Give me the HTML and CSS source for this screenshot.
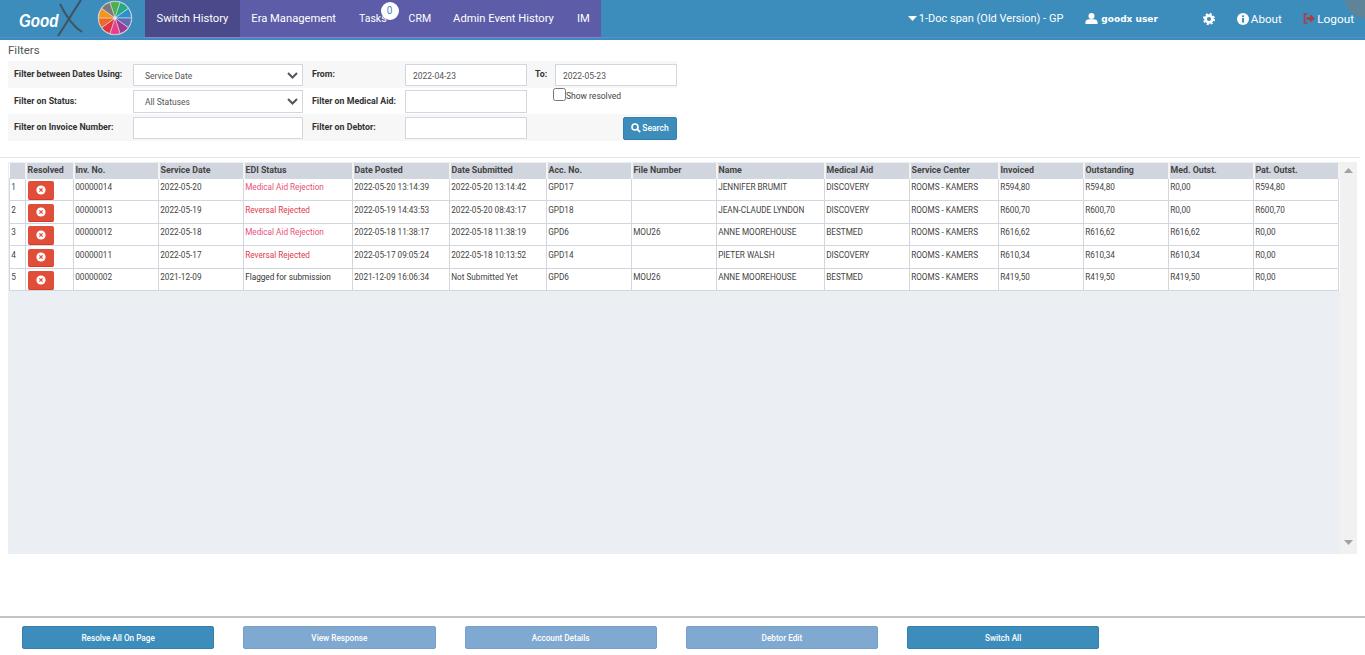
FILE: index.html
```html
<!DOCTYPE html>
<html lang="en">
<head>
<meta charset="utf-8">
<title>Switch History</title>
<link rel="stylesheet" href="styles.css">
</head>
<body>
<header class="nav">
  <span class="corner-blob"></span>
  <div class="logo">
    <span class="logo-good">Good</span>
    <svg class="logo-x" width="28" height="38" viewBox="0 0 28 38"><path d="M3 4C8 14 15 26 25 32" stroke="#3f5564" stroke-width="2" fill="none"/><path d="M24 0C16 12 9 24 1 36" stroke="#3f5564" stroke-width="2.2" fill="none"/></svg>
  </div>
  <svg class="wheel" width="36" height="36" viewBox="-18 -18 36 36">
    <circle r="17.2" fill="#c9d3dc"/>
    <g class="wedges">
    <path fill="#4caf50" d="M0 0L-5 -15.7A16.5 16.5 0 0 1 5 -15.7Z"/>
    <path fill="#26a880" transform="rotate(36)" d="M0 0L-5 -15.7A16.5 16.5 0 0 1 5 -15.7Z"/>
    <path fill="#2d8fd0" transform="rotate(72)" d="M0 0L-5 -15.7A16.5 16.5 0 0 1 5 -15.7Z"/>
    <path fill="#5f6bb5" transform="rotate(108)" d="M0 0L-5 -15.7A16.5 16.5 0 0 1 5 -15.7Z"/>
    <path fill="#9b3a8f" transform="rotate(144)" d="M0 0L-5 -15.7A16.5 16.5 0 0 1 5 -15.7Z"/>
    <path fill="#e83e8c" transform="rotate(180)" d="M0 0L-5 -15.7A16.5 16.5 0 0 1 5 -15.7Z"/>
    <path fill="#e0353f" transform="rotate(216)" d="M0 0L-5 -15.7A16.5 16.5 0 0 1 5 -15.7Z"/>
    <path fill="#f26522" transform="rotate(252)" d="M0 0L-5 -15.7A16.5 16.5 0 0 1 5 -15.7Z"/>
    <path fill="#f7941d" transform="rotate(288)" d="M0 0L-5 -15.7A16.5 16.5 0 0 1 5 -15.7Z"/>
    <path fill="#7a7a7a" transform="rotate(324)" d="M0 0L-5 -15.7A16.5 16.5 0 0 1 5 -15.7Z"/>
    </g>
    <circle r="1.8" fill="#e4e8ea"/>
  </svg>
  <nav class="tabs">
    <a class="tab tab-active">Switch History</a>
    <a class="tab">Era Management</a>
    <a class="tab tab-tight">Tasks<span class="badge">0</span></a>
    <a class="tab tab-tight">CRM</a>
    <a class="tab">Admin Event History</a>
    <a class="tab">IM</a>
  </nav>
  <div class="nav-right">
    <span class="nav-item practice"><svg width="9" height="5" viewBox="0 0 9 5"><path d="M0 0H9L4.5 5Z" fill="#fff"/></svg>1-Doc span (Old Version) - GP</span>
    <span class="nav-item user"><svg width="13" height="11" viewBox="0 0 13 11"><circle cx="6.5" cy="3" r="3" fill="#fff"/><path d="M0.5 11V9.2C0.5 7.2 2.5 6.3 4 6.3H9C10.5 6.3 12.5 7.2 12.5 9.2V11Z" fill="#fff"/></svg><span class="user-name">goodx user</span></span>
    <span class="nav-item gear"><svg width="12" height="12" viewBox="0 0 12 12"><circle cx="6" cy="6" r="3.4" fill="none" stroke="#fff" stroke-width="2.6"/><circle cx="6" cy="6" r="5" fill="none" stroke="#fff" stroke-width="2" stroke-dasharray="2.1 1.83"/></svg></span>
    <span class="nav-item about"><svg width="12" height="12" viewBox="0 0 12 12"><circle cx="6" cy="6" r="6" fill="#fff"/><rect x="5" y="5" width="2" height="4.5" fill="#3c8dbc"/><rect x="5" y="2.4" width="2" height="1.7" fill="#3c8dbc"/></svg>About</span>
    <span class="nav-item logout"><svg width="12" height="11" viewBox="0 0 12 11"><path d="M4.5 1H1.5V10H4.5" fill="none" stroke="#a5413f" stroke-width="1.7"/><path d="M3.5 4H7V1.2L12 5.5L7 9.8V7H3.5Z" fill="#a5413f"/></svg>Logout</span>
  </div>
</header>

<main class="content">
  <h2 class="filters-title">Filters</h2>
  <form class="filters">
    <div class="f-row f-band f-first">
      <label class="f-label">Filter between Dates Using:</label>
      <div class="f-select">Service Date<svg width="11" height="7" viewBox="0 0 11 7"><path d="M1 1L5.5 5.5L10 1" fill="none" stroke="#555" stroke-width="2"/></svg></div>
      <label class="f-label">From:</label>
      <div class="f-input">2022-04-23</div>
      <label class="f-label f-to">To:</label>
      <div class="f-input">2022-05-23</div>
    </div>
    <div class="f-row f-mid">
      <label class="f-label">Filter on Status:</label>
      <div class="f-select">All Statuses<svg width="11" height="7" viewBox="0 0 11 7"><path d="M1 1L5.5 5.5L10 1" fill="none" stroke="#555" stroke-width="2"/></svg></div>
      <label class="f-label">Filter on Medical Aid:</label>
      <div class="f-input"></div>
      <div class="f-check"><span class="check-box"></span><span class="check-text">Show resolved</span></div>
    </div>
    <div class="f-row f-band f-last">
      <label class="f-label">Filter on Invoice Number:</label>
      <div class="f-input"></div>
      <label class="f-label">Filter on Debtor:</label>
      <div class="f-input"></div>
      <div class="f-search"><button type="button" class="search-btn"><svg width="10" height="10" viewBox="0 0 10 10"><circle cx="4" cy="4" r="3" fill="none" stroke="#fff" stroke-width="1.6"/><path d="M6.2 6.2L9.2 9.2" stroke="#fff" stroke-width="1.8"/></svg>Search</button></div>
    </div>
  </form>
  <hr class="rule">
  <section class="grid-panel">
    <div class="grid-area">
      <table class="grid">
        <colgroup>
          <col class="c0"><col class="c1"><col class="c2"><col class="c2"><col class="c3"><col class="c4"><col class="c4"><col class="c2"><col class="c2"><col class="c5"><col class="c2"><col class="c6"><col class="c2"><col class="c2"><col class="c2"><col class="c2">
        </colgroup>
        <thead>
          <tr><th></th><th>Resolved</th><th>Inv. No.</th><th>Service Date</th><th>EDI Status</th><th>Date Posted</th><th>Date Submitted</th><th>Acc. No.</th><th>File Number</th><th>Name</th><th>Medical Aid</th><th>Service Center</th><th>Invoiced</th><th>Outstanding</th><th>Med. Outst.</th><th>Pat. Outst.</th></tr>
        </thead>
        <tbody>
          <tr class="r-short"><td>1</td><td><button type="button" class="x-btn"><svg width="10" height="10" viewBox="0 0 10 10"><circle cx="5" cy="5" r="4.6" fill="#fff"/><path d="M3.4 3.4L6.6 6.6M6.6 3.4L3.4 6.6" stroke="#e04e39" stroke-width="1.3"/></svg></button></td><td>00000014</td><td>2022-05-20</td><td class="st-pink">Medical Aid Rejection</td><td>2022-05-20 13:14:39</td><td>2022-05-20 13:14:42</td><td>GPD17</td><td></td><td>JENNIFER BRUMIT</td><td>DISCOVERY</td><td>ROOMS - KAMERS</td><td>R594,80</td><td>R594,80</td><td>R0,00</td><td>R594,80</td></tr>
          <tr class="r-tall"><td>2</td><td><button type="button" class="x-btn"><svg width="10" height="10" viewBox="0 0 10 10"><circle cx="5" cy="5" r="4.6" fill="#fff"/><path d="M3.4 3.4L6.6 6.6M6.6 3.4L3.4 6.6" stroke="#e04e39" stroke-width="1.3"/></svg></button></td><td>00000013</td><td>2022-05-19</td><td class="st-red">Reversal Rejected</td><td>2022-05-19 14:43:53</td><td>2022-05-20 08:43:17</td><td>GPD18</td><td></td><td>JEAN-CLAUDE LYNDON</td><td>DISCOVERY</td><td>ROOMS - KAMERS</td><td>R600,70</td><td>R600,70</td><td>R0,00</td><td>R600,70</td></tr>
          <tr class="r-short"><td>3</td><td><button type="button" class="x-btn"><svg width="10" height="10" viewBox="0 0 10 10"><circle cx="5" cy="5" r="4.6" fill="#fff"/><path d="M3.4 3.4L6.6 6.6M6.6 3.4L3.4 6.6" stroke="#e04e39" stroke-width="1.3"/></svg></button></td><td>00000012</td><td>2022-05-18</td><td class="st-pink">Medical Aid Rejection</td><td>2022-05-18 11:38:17</td><td>2022-05-18 11:38:19</td><td>GPD6</td><td>MOU26</td><td>ANNE MOOREHOUSE</td><td>BESTMED</td><td>ROOMS - KAMERS</td><td>R616,62</td><td>R616,62</td><td>R616,62</td><td>R0,00</td></tr>
          <tr class="r-tall"><td>4</td><td><button type="button" class="x-btn"><svg width="10" height="10" viewBox="0 0 10 10"><circle cx="5" cy="5" r="4.6" fill="#fff"/><path d="M3.4 3.4L6.6 6.6M6.6 3.4L3.4 6.6" stroke="#e04e39" stroke-width="1.3"/></svg></button></td><td>00000011</td><td>2022-05-17</td><td class="st-red">Reversal Rejected</td><td>2022-05-17 09:05:24</td><td>2022-05-18 10:13:52</td><td>GPD14</td><td></td><td>PIETER WALSH</td><td>DISCOVERY</td><td>ROOMS - KAMERS</td><td>R610,34</td><td>R610,34</td><td>R610,34</td><td>R0,00</td></tr>
          <tr class="r-short"><td>5</td><td><button type="button" class="x-btn"><svg width="10" height="10" viewBox="0 0 10 10"><circle cx="5" cy="5" r="4.6" fill="#fff"/><path d="M3.4 3.4L6.6 6.6M6.6 3.4L3.4 6.6" stroke="#e04e39" stroke-width="1.3"/></svg></button></td><td>00000002</td><td>2021-12-09</td><td class="st-dark">Flagged for submission</td><td>2021-12-09 16:06:34</td><td>Not Submitted Yet</td><td>GPD6</td><td>MOU26</td><td>ANNE MOOREHOUSE</td><td>BESTMED</td><td>ROOMS - KAMERS</td><td>R419,50</td><td>R419,50</td><td>R419,50</td><td>R0,00</td></tr>
        </tbody>
      </table>
    </div>
    <div class="scrollbar">
      <svg width="9" height="5" viewBox="0 0 9 5"><path d="M0 5L4.5 0L9 5Z" fill="#a3a3a3"/></svg>
      <svg width="9" height="5" viewBox="0 0 9 5"><path d="M0 0L4.5 5L9 0Z" fill="#a3a3a3"/></svg>
    </div>
  </section>
</main>

<footer class="actions">
  <button type="button" class="act">Resolve All On Page</button>
  <button type="button" class="act act-off">View Response</button>
  <button type="button" class="act act-off">Account Details</button>
  <button type="button" class="act act-off">Debtor Edit</button>
  <button type="button" class="act">Switch All</button>
</footer>
</body>
</html>
```

FILE: styles.css
```css
* { box-sizing: border-box; }
html, body { margin: 0; padding: 0; }
body {
  width: 1365px;
  height: 655px;
  overflow: hidden;
  background: #fff;
  font-family: Roboto, "Noto Sans", sans-serif;
  color: #333;
}
.nav {
  display: flex;
  position: relative;
  height: 38px;
  margin-bottom: 2px;
  background: #3c8dbc;
  border-bottom: 1px solid #5b8ccc;
  box-shadow: 0 2px 0 #3c8dbc;
  color: #fff;
  font-size: 11.2px;
}
.corner-blob {
  position: absolute;
  left: 1345px;
  top: -22px;
  width: 40px;
  height: 40px;
  border-radius: 50%;
  background: #5f8497;
  clip-path: inset(22px 20px 0 0);
}
.logo { width: 97px; height: 37px; position: relative; flex: none; }
.logo-good {
  position: absolute;
  left: 19px;
  top: 11px;
  font: italic bold 18px "Liberation Sans", sans-serif;
  color: #fff;
  transform: scaleX(0.84);
  transform-origin: left center;
}
.logo-x { position: absolute; left: 57px; top: 0; }
.wheel { flex: none; margin-top: -0.5px; }
.wedges path { stroke: #d8e0e4; stroke-width: 0.5; }
.tabs {
  display: flex;
  margin-left: 12px;
  background: #5c5ca8;
  height: 38px;
  border-bottom: 1px solid #8f7fd0;
}
.tab {
  display: flex;
  align-items: center;
  padding: 0 11.5px;
  height: 37px;
  position: relative;
  white-space: nowrap;
}
.tab-tight { font-size: 10.5px; padding-right: 10.5px; }
.tab-active { background: #4a4a8a; }
.badge {
  position: absolute;
  left: 33px;
  top: 2px;
  width: 18px;
  height: 18px;
  border-radius: 50%;
  background: #fff;
  color: #3c8dbc;
  font-size: 10px;
  text-align: center;
  line-height: 18px;
}
.nav-right { display: flex; flex: 1; align-items: center; height: 37px; justify-content: flex-end; position: relative; }
.nav-item { display: inline-flex; align-items: center; white-space: nowrap; }
.nav-item svg { margin-right: 2px; }
.practice { font-size: 11px; }
.user { margin-left: 22px; }
.user-name { font: 9px "DejaVu Sans", sans-serif; font-weight: 700; margin-left: 1px; }
.gear { margin-left: 45px; }
.about { margin-left: 20px; font-size: 11.6px; }
.logout { margin-left: 21.5px; margin-right: 11px; font-size: 11.8px; }

.content { padding: 0 8px; }
.filters-title {
  margin: 0;
  height: 21px;
  padding-top: 4px;
  font-size: 11.5px;
  line-height: 13px;
  font-weight: 400;
  color: #555;
}
.filters { width: 669px; }
.f-row {
  display: grid;
  grid-template-columns: 125px 170px 102px 122px 28px 122px;
  align-items: center;
}
.f-first, .f-last { height: 27px; }
.f-mid { height: 26px; }
.f-band { background: #f7f7f7; }
.f-label {
  padding-left: 6px;
  font-size: 8.8px;
  font-weight: 700;
  color: #333;
  white-space: nowrap;
}
.f-band .f-label { margin-top: -1px; }
.f-label:nth-child(3) { padding-left: 9px; }
.f-to { padding-left: 8px !important; }
.f-select, .f-input {
  height: 22px;
  margin-top: 1px;
  background: #fff;
  border: 1px solid #d2d6de;
  font-size: 8.5px;
  color: #555;
  display: flex;
  align-items: center;
  padding-top: 2px;
}
.f-mid .f-select, .f-mid .f-input { height: 23px; margin-top: 0; }
.f-select { justify-content: space-between; padding: 2px 4px 0 11px; }
.f-select svg { margin-top: -2px; }
.f-input { padding-left: 7px; }
.f-check { grid-column: span 2; display: flex; align-items: flex-start; margin: -11px 0 0 26px; }
.check-box {
  width: 13px; height: 13px; border: 1px solid #767676; border-radius: 2.5px; background: #fff; flex: none;
}
.check-text { font-size: 8.5px; line-height: 16px; color: #444; }
.f-search { grid-column: span 2; display: flex; justify-content: flex-end; margin-top: 1px; }
.search-btn {
  width: 54px; height: 23px; padding: 0; border: 1px solid #367fa9; border-radius: 2px;
  background: #3c8dbc; color: #fff; font: 500 8.5px Roboto, sans-serif;
  display: flex; align-items: center; justify-content: center; gap: 1px;
}
.rule { margin: 16px -8px 4px; border: 0; border-top: 1px solid #e4e4e4; width: 1360px; }
.grid-panel { display: flex; height: 392px; }
.grid-area { width: 1332px; background: #ebeef2; padding: 1px 0 0 1px; flex: none; }
.scrollbar {
  width: 17px; background: #f1f1f1; display: flex; flex-direction: column;
  justify-content: space-between; align-items: center; padding: 6px 0 9px;
}
.grid {
  border-collapse: collapse;
  table-layout: fixed;
  width: 1329px;
  background: #fff;
  font-size: 8.2px;
  color: #444;
}
.c0 { width: 16px; } .c1 { width: 48px; } .c2 { width: 85px; } .c3 { width: 109px; }
.c4 { width: 97px; } .c5 { width: 108px; } .c6 { width: 89px; }
.grid th {
  height: 15px;
  background: #d0d5de;
  border: 1px solid #f2f3f5;
  border-width: 0 2px 0 0;
  text-align: left;
  padding: 0 1px;
  font-weight: 700;
  font-size: 8.8px;
  color: #444;
  white-space: nowrap;
}
.grid td {
  border: 1px solid #d2d6de;
  padding: 3px 1.2px 0;
  vertical-align: top;
  line-height: 11px;
  white-space: nowrap;
  overflow: hidden;
}
.r-short { height: 22px; }
.r-tall { height: 23px; }
.grid .r-tall td { padding-top: 4px; }
.x-btn {
  display: flex; align-items: center; justify-content: center;
  width: 26px; height: 19px; margin: -1px 0 0 1px; padding: 0; border: 0;
  border-radius: 2px; background: #e04e39; border-bottom: 1px solid #d73925;
}
.r-tall .x-btn { height: 18px; }
.st-pink { color: #e8507a; }
.st-red { color: #e03a4a; }
.st-dark { color: #333; }

.actions {
  position: absolute;
  left: 0;
  right: 0;
  top: 616px;
  height: 39px;
  border-top: 2px solid #c4c4c4;
  display: flex;
  padding: 8px 0 0 22px;
  gap: 29px;
}
.act {
  width: 192.25px; height: 23px; padding: 0; border: 1px solid #367fa9; border-radius: 2px;
  background: #3c8dbc; color: #fff; font: 500 8.2px Roboto, sans-serif;
}
.act-off { background: #7fa9d0; border-color: #74a0ca; }
```
